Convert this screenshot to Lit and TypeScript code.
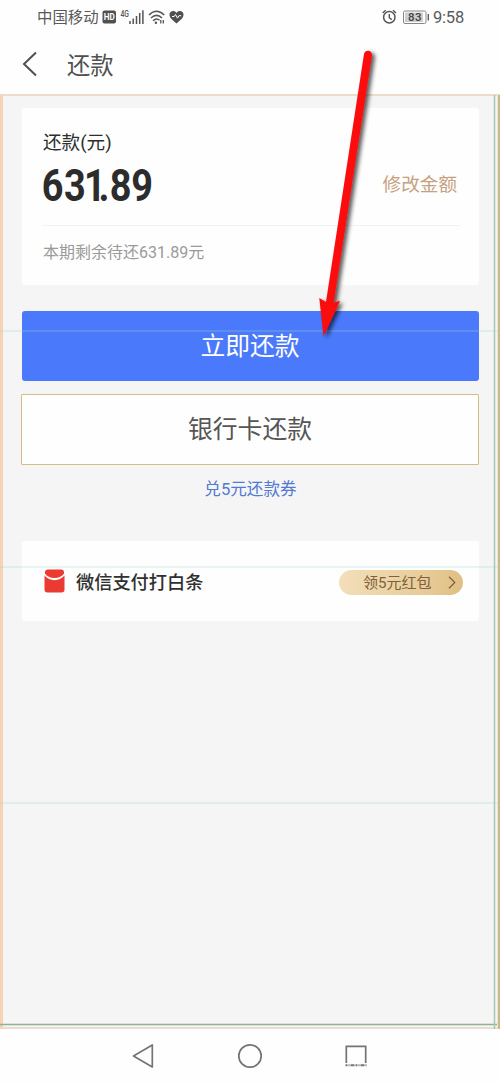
import { LitElement, html, css, svg } from "lit";
import { customElement } from "lit/decorators.js";

const GUIDES = [331, 567, 803];

@customElement("status-bar")
class StatusBar extends LitElement {
  static styles = css`
    :host { display: flex; height: 34px; align-items: center; padding: 0 36px 0 37px; color: #5a5a5a; font-size: 15.4px; line-height: 34px; }
    .left, .right { display: flex; align-items: center; height: 34px; }
    .left span, .time { padding-top: 2px; }
    .right { margin-left: auto; font-size: 16.5px; }
    svg { display: block; }
    .time { letter-spacing: -0.2px; margin-left: 4px; font-family: Roboto, sans-serif; }
    .hd { font: 700 9px Roboto, sans-serif; }
    .net { font: 500 9px Roboto, sans-serif; }
    .bat { font: 500 11.5px Roboto, sans-serif; }
  `;
  render() {
    return html`
      <div class="left">
        <span>中国移动</span>
        <svg width="88" height="34" viewBox="98.500 0 88 34" fill="none" stroke="#555">
          <rect x="102" y="10.5" width="13.5" height="13" rx="2" fill="#505050" stroke="none" />
          <text class="hd" x="103.3" y="20.3" fill="#fff" stroke="none" textLength="11" lengthAdjust="spacingAndGlyphs">HD</text>
          <text class="net" x="120" y="16.5" fill="#555" stroke="none" textLength="8.5" lengthAdjust="spacingAndGlyphs">4G</text>
          <path d="M129.5 21v3M132.7 18.5V24M136 16V24M139.2 13V24M142.4 10.3V24" stroke-width="1.5" />
          <path d="M148.5 15Q156 7.5 163.8 15M150.5 18Q156 12.7 161.5 18M152.5 20.8Q156 17.4 159 20.3" stroke-width="1.5" />
          <circle cx="155.4" cy="22.8" r="1.2" fill="#555" stroke="none" />
          <path d="M160.3 20v3.5M162.8 20v3.5" stroke-width="1.3" />
          <path d="M176 23.5C172 20 169 17.7 169 14.7C169 10.7 174 9.8 176 13C178 9.8 183 10.7 183 14.7C183 17.7 180 20 176 23.5Z" fill="#505050" stroke="none" />
          <path d="M171.5 16.5h2.2l1.3-2 2 3.6 1.5-2.4h2.2" stroke="#fff" stroke-width="1" />
        </svg>
      </div>
      <div class="right">
        <svg width="50" height="34" viewBox="379 0 50 34" fill="none" stroke="#555">
          <circle cx="389.3" cy="17.3" r="5.7" stroke-width="1.5" />
          <path d="M389.3 14v3.7l2.4 1.9M382.7 13l3-2.8M393 10.2l3 2.8" stroke-width="1.4" />
          <rect x="403.5" y="11" width="22.5" height="12.5" rx="1.5" fill="#fff" stroke="#888" />
          <rect x="405" y="12.5" width="18" height="9.5" fill="#cfcfcf" stroke="none" />
          <text class="bat" x="408" y="21.3" fill="#444" stroke="none" textLength="13.5">83</text>
          <path d="M428.3 14v6.5" stroke-width="1.3" />
        </svg>
        <span class="time">9:58</span>
      </div>`;
  }
}

@customElement("amount-card")
class AmountCard extends LitElement {
  static styles = css`
    :host { display: block; background: #fefefe; border-radius: 3px; height: 177px; box-sizing: border-box; padding: 23px 19px 0 21px; box-shadow: 0 0 3px #fafafa; }
    .label { font-size: 18.6px; line-height: 24px; color: #2e2e2e; }
    .row { display: flex; justify-content: space-between; height: 70px; border-bottom: 1px solid #edf4f4; padding-right: 3px; }
    .num { display: block; font: 700 43.5px Roboto, sans-serif; fill: #2c2c2c; overflow: visible; }
    .edit { color: #c6a17f; font-size: 18.6px; line-height: 24px; margin-top: 18px; }
    .note { color: #9a9a9a; font-size: 16px; line-height: 24px; margin-top: 15px; }
  `;
  render() {
    return html`
      <div class="label">还款(元)</div>
      <div class="row">
        <svg class="num" width="120" height="66"><text transform="scale(.87 1)" x="-1.5 24.1 47.1 63.8 76.8 101.5" y="46">631.89</text></svg>
        <span class="edit">修改金额</span>
      </div>
      <div class="note">本期剩余待还631.89元</div>`;
  }
}

@customElement("offer-card")
class OfferCard extends LitElement {
  static styles = css`
    :host { display: flex; align-items: center; background: #fefefe; border-radius: 3px; height: 80px; box-sizing: border-box; padding: 2px 16px 0 22px; box-shadow: 0 0 3px #fafafa; }
    svg { display: block; }
    .offer { margin-top: -2px; }
    .title { font-size: 18.2px; font-weight: 500; color: #303030; margin: -2px 0 0 11px; }
    .pill { margin-left: auto; width: 124px; height: 25px; border-radius: 13px; box-sizing: border-box; padding: 0 7px 0 24px; display: flex; align-items: center; justify-content: space-between; background: linear-gradient(100deg, #f3dfba, #e8cd9b 65%, #dfbe83); color: #80603a; font-size: 15px; line-height: 25px; }
    .pill span { padding-top: 2px; }
  `;
  render() {
    return html`
      <svg class="offer" width="21" height="24" viewBox="0 0 21 24" fill="#ea3a32">
        <path d="M1 4.5V3.5Q1 .5 4 .5H17Q20 .5 20 3.5V4.5Q17 8.8 10.5 9Q4 8.8 1 4.5Z" />
        <path d="M.5 6.5Q4.5 11 10.5 11.2Q16.5 11 20.5 6.5V20.5Q20.5 23.5 17.5 23.5H3.5Q.5 23.5 .5 20.5Z" />
      </svg>
      <span class="title">微信支付打白条</span>
      <div class="pill"><span>领5元红包</span>
        <svg width="8" height="13" viewBox="0 0 8 13" fill="none" stroke="#80603a" stroke-width="1.2"><path d="M1 .8 6.8 6.5 1 12.2" /></svg>
      </div>`;
  }
}

@customElement("app-root")
class AppRoot extends LitElement {
  static styles = css`
    :host { display: flex; flex-direction: column; position: relative; width: 500px; height: 1083px; background: #fefefe; overflow: hidden; font-family: Roboto, "Noto Sans CJK SC", sans-serif; }
    header { display: flex; align-items: center; height: 60px; padding: 3px 0 0 22px; box-sizing: border-box; color: #505050; font-size: 23.3px; line-height: 57px; }
    header svg { margin: 0 29px 4px 0; }
    header span { padding-top: 2px; }
    main { height: 935px; box-sizing: border-box; background: #f5f5f5; border: solid #eddccb; border-width: 2px 0 2px 3px; border-left-color: #f6d3b5; padding: 12px 21px 0 19px; }
    .btn { display: flex; align-items: center; justify-content: center; box-sizing: border-box; height: 70px; border-radius: 3px; font-size: 24.8px; margin: 26px 0 0 -1px; }
    .primary { background: #4a79fb; color: #fff; padding: 0 1px 5px 0; margin-left: 0; }
    .outline { background: #fefefe; border: 1px solid #d5bd8a; border-radius: 1px; color: #555; margin-top: 13px; height: 71px; padding-bottom: 6px; }
    .link { text-align: center; color: #527ad0; font-size: 16.6px; line-height: 24px; margin: 13px 0 39px 0; }
    nav { flex: 1; }
    nav svg { display: block; }
    .overlay { position: absolute; left: 0; top: 0; pointer-events: none; }
  `;
  render() {
    return html`
      <status-bar></status-bar>
      <header>
        <svg width="16" height="26" viewBox="0 0 16 26" fill="none" stroke="#505050" stroke-width="2"><path d="M14 1.5 2 13 14 24.5" /></svg>
        <span>还款</span>
      </header>
      <main>
        <amount-card></amount-card>
        <div class="btn primary">立即还款</div>
        <div class="btn outline">银行卡还款</div>
        <div class="link">兑5元还款券</div>
        <offer-card></offer-card>
      </main>
      <nav>
        <svg width="500" height="54" viewBox="0 1029 500 54" fill="none" stroke="#747474" stroke-width="1.7" stroke-linejoin="round">
          <path d="M152.3 1045V1067L133.5 1056Z" />
          <circle cx="250" cy="1056" r="11.2" />
          <path d="M346.3 1063V1046.3H365.7V1063" stroke-linejoin="miter" />
          <path d="M345.5 1065.3H366.5" stroke-width="2" stroke-dasharray="2 1 1 1 4 1" />
        </svg>
      </nav>
      <svg class="overlay" width="500" height="1083" fill="none">
        <defs>
          <filter id="shadow" x="-30%" y="-10%" width="180%" height="120%"><feDropShadow dx="3" dy="2" stdDeviation="2" flood-color="#000" flood-opacity=".65" /></filter>
        </defs>
        ${GUIDES.map((y) => svg`<path d=${`M0 ${y}H500`} stroke="#9fd2ca" stroke-opacity=".32" stroke-width="1.4" />`)}
        <path d="M0 1024.5H500" stroke="#8db394" stroke-width="1.3" />
        <path d="M494.5 95V1029" stroke="#a4c9b8" stroke-width="1.5" />
        <path d="M497.5 95V1029" stroke="#ede5cf" />
        <path d="M499 95V1029" stroke="#cab78b" stroke-width="2" />
        <path d="M364 54Q365 50.5 368.5 50.7Q372 51.5 372 55L333.7 302.5L340 301L323.5 336.5L319.3 298L326 302Z" fill="#fb0a0a" filter="url(#shadow)" />
      </svg>`;
  }
}
